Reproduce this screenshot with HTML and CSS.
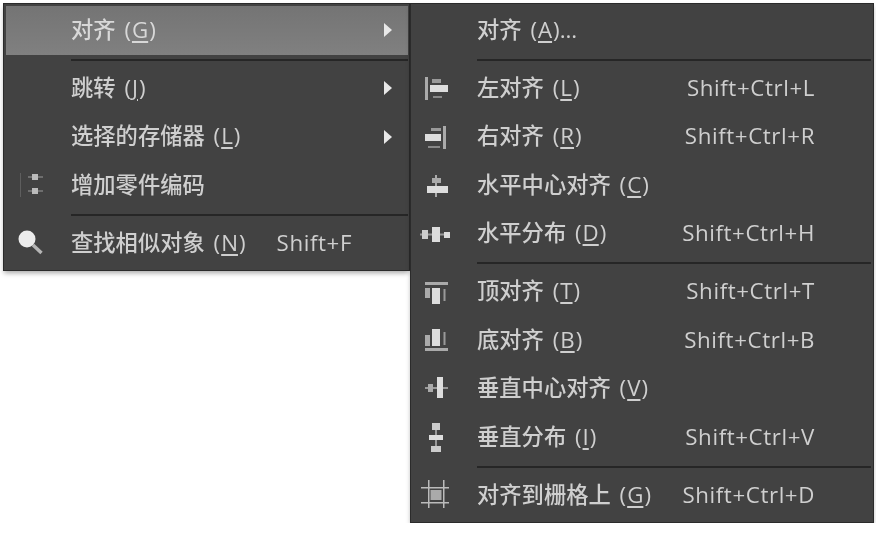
FILE: index.html
```html
<!DOCTYPE html>
<html lang="zh-CN">

<head>
    <meta charset="UTF-8">
    <title>对齐菜单</title>
    <link rel="stylesheet" href="styles.css">
</head>

<body>
    <div class="menus">

        <!-- main menu -->
        <div class="menu menu-main">
            <div class="row active">
                <span class="icon"></span>
                <span class="label">对齐 (<u>G</u>)</span>
                <span class="end"><i class="arrow"></i></span>
            </div>
            <div class="sep"></div>
            <div class="row">
                <span class="icon"></span>
                <span class="label">跳转 (<u>J</u>)</span>
                <span class="end"><i class="arrow"></i></span>
            </div>
            <div class="row">
                <span class="icon"></span>
                <span class="label">选择的存储器 (<u>L</u>)</span>
                <span class="end"><i class="arrow"></i></span>
            </div>
            <div class="row">
                <span class="icon">
                    <svg width="30" height="30" viewBox="0 0 30 30">
                        <rect x="6" y="3" width="1" height="24" fill="#5e5e5e" />
                        <rect x="14" y="6.5" width="15" height="1" fill="#999" />
                        <rect x="18" y="4" width="6" height="6" fill="#bbb" />
                        <rect x="14" y="20.5" width="15" height="1" fill="#999" />
                        <rect x="18" y="18" width="6" height="6" fill="#bbb" />
                    </svg>
                </span>
                <span class="label">增加零件编码</span>
                <span class="end"></span>
            </div>
            <div class="sep"></div>
            <div class="row">
                <span class="icon">
                    <svg width="30" height="30" viewBox="0 0 30 30">
                        <line x1="19" y1="17" x2="27.5" y2="25" stroke="#b5b5b5" stroke-width="3.5" />
                        <circle cx="13" cy="11" r="8.5" fill="#ececec" />
                    </svg>
                </span>
                <span class="label">查找相似对象 (<u>N</u>)</span>
                <span class="key">Shift+F</span>
                <span class="end"></span>
            </div>
        </div>

        <!-- align submenu -->
        <div class="menu menu-sub">
            <div class="row">
                <span class="icon"></span>
                <span class="label">对齐 (<u>A</u>)...</span>
                <span class="end"></span>
            </div>
            <div class="sep"></div>
            <div class="row">
                <span class="icon">
                    <svg width="30" height="30" viewBox="0 0 30 30">
                        <rect x="5" y="4" width="3" height="23" fill="#aaa" />
                        <rect x="12" y="6" width="9" height="4" fill="#999" />
                        <rect x="10" y="12" width="18" height="7" fill="#ddd" />
                        <rect x="13" y="23" width="9" height="2" fill="#888" />
                    </svg>
                </span>
                <span class="label">左对齐 (<u>L</u>)</span>
                <span class="key">Shift+Ctrl+L</span>
                <span class="end"></span>
            </div>
            <div class="row">
                <span class="icon">
                    <svg width="30" height="30" viewBox="0 0 30 30">
                        <rect x="23" y="4" width="3" height="23" fill="#aaa" />
                        <rect x="11" y="6" width="10" height="3" fill="#999" />
                        <rect x="5" y="12" width="16" height="7" fill="#ddd" />
                        <rect x="8" y="24" width="12" height="2" fill="#888" />
                    </svg>
                </span>
                <span class="label">右对齐 (<u>R</u>)</span>
                <span class="key">Shift+Ctrl+R</span>
                <span class="end"></span>
            </div>
            <div class="row">
                <span class="icon">
                    <svg width="30" height="30" viewBox="0 0 30 30">
                        <rect x="15" y="5" width="2" height="22" fill="#aaa" />
                        <rect x="12" y="8" width="9" height="5" fill="#aaa" />
                        <rect x="7" y="16" width="21" height="7" fill="#ddd" />
                    </svg>
                </span>
                <span class="label">水平中心对齐 (<u>C</u>)</span>
                <span class="end"></span>
            </div>
            <div class="row">
                <span class="icon">
                    <svg width="30" height="30" viewBox="0 0 30 30">
                        <rect x="0" y="14.5" width="30" height="2" fill="#999" />
                        <rect x="2" y="11" width="6" height="9" fill="#ccc" />
                        <rect x="12" y="8" width="8" height="15" fill="#ddd" />
                        <rect x="24" y="13" width="6" height="6" fill="#ddd" />
                    </svg>
                </span>
                <span class="label">水平分布 (<u>D</u>)</span>
                <span class="key">Shift+Ctrl+H</span>
                <span class="end"></span>
            </div>
            <div class="sep"></div>
            <div class="row">
                <span class="icon">
                    <svg width="30" height="30" viewBox="0 0 30 30">
                        <rect x="5" y="5" width="23" height="3" fill="#aaa" />
                        <rect x="5" y="11" width="5" height="10" fill="#aaa" />
                        <rect x="12" y="11" width="8" height="16" fill="#ddd" />
                        <rect x="23.5" y="12" width="2" height="12" fill="#999" />
                    </svg>
                </span>
                <span class="label">顶对齐 (<u>T</u>)</span>
                <span class="key">Shift+Ctrl+T</span>
                <span class="end"></span>
            </div>
            <div class="row">
                <span class="icon">
                    <svg width="30" height="30" viewBox="0 0 30 30">
                        <rect x="5" y="10" width="5" height="11" fill="#aaa" />
                        <rect x="12" y="4" width="8" height="17" fill="#ddd" />
                        <rect x="23.5" y="7" width="2" height="13" fill="#999" />
                        <rect x="5" y="23" width="23" height="3" fill="#aaa" />
                    </svg>
                </span>
                <span class="label">底对齐 (<u>B</u>)</span>
                <span class="key">Shift+Ctrl+B</span>
                <span class="end"></span>
            </div>
            <div class="row">
                <span class="icon">
                    <svg width="30" height="30" viewBox="0 0 30 30">
                        <rect x="5" y="13" width="23" height="2" fill="#999" />
                        <rect x="8" y="10" width="5" height="8" fill="#aaa" />
                        <rect x="17" y="3" width="6" height="21" fill="#ddd" />
                    </svg>
                </span>
                <span class="label">垂直中心对齐 (<u>V</u>)</span>
                <span class="end"></span>
            </div>
            <div class="row">
                <span class="icon">
                    <svg width="30" height="30" viewBox="0 0 30 30">
                        <rect x="15" y="1" width="2" height="29" fill="#999" />
                        <rect x="12" y="1" width="8" height="7" fill="#ccc" />
                        <rect x="9" y="13" width="14" height="5" fill="#ddd" />
                        <rect x="11" y="24" width="10" height="6" fill="#ccc" />
                    </svg>
                </span>
                <span class="label">垂直分布 (<u>I</u>)</span>
                <span class="key">Shift+Ctrl+V</span>
                <span class="end"></span>
            </div>
            <div class="sep"></div>
            <div class="row">
                <span class="icon">
                    <svg width="30" height="30" viewBox="0 0 30 30">
                        <rect x="8" y="0" width="1.5" height="28" fill="#bbb" />
                        <rect x="23" y="0" width="1.5" height="28" fill="#bbb" />
                        <rect x="1" y="7" width="28" height="1.5" fill="#bbb" />
                        <rect x="1" y="22" width="28" height="1.5" fill="#bbb" />
                        <rect x="10.5" y="10" width="11" height="10" fill="#aaa" />
                    </svg>
                </span>
                <span class="label">对齐到栅格上 (<u>G</u>)</span>
                <span class="key">Shift+Ctrl+D</span>
                <span class="end"></span>
            </div>
        </div>

    </div>
</body>

</html>
```

FILE: styles.css
```css
* {
    margin: 0;
    padding: 0;
    box-sizing: border-box;
}

body {
    background: #fff;
    font-family: "Open Sans", "Noto Sans CJK SC", sans-serif;
    font-size: 22.3px;
    font-weight: 500;
    color: #cfcfcf;
}

.menus {
    display: flex;
    align-items: flex-start;
    padding: 3px 2px 0 3px;
    filter: blur(0.7px);
}

.menu {
    background: #424242;
    border: 1px solid #2b2b2b;
    padding: 2px;
    box-shadow: 0 3px 5px -1px rgba(0, 0, 0, .35);
}

.menu-main {
    width: 407px;
    padding-right: 1px;
}

.menu-sub {
    flex: 1;
}

/* ROWS ================================= */
.row {
    display: flex;
    align-items: center;
    height: 48.5px;
}

.row.active {
    background: linear-gradient(#747474, #808080);
    color: #d8d8d8;
}

.icon {
    display: flex;
    align-items: center;
    width: 64px;
    padding-left: 7px;
    flex-shrink: 0;
}

.menu-main .icon {
    width: 65px;
    padding-left: 8px;
}

.label {
    flex: 1;
    padding-bottom: 4px;
    white-space: nowrap;
    word-spacing: 3px;
}

.label u {
    padding: 0 1px;
    text-underline-offset: 3px;
}

.key {
    padding-bottom: 2px;
    letter-spacing: .6px;
    white-space: nowrap;
}

.end {
    display: flex;
    justify-content: flex-end;
    width: 56px;
    padding-right: 17px;
    flex-shrink: 0;
}

.menu-main .end {
    padding-right: 16px;
}

.arrow {
    display: block;
    border-left: 8px solid #e8e8e8;
    border-top: 7px solid transparent;
    border-bottom: 7px solid transparent;
}

.sep {
    height: 2px;
    margin: 4px 0 3.5px 64px;
    background: #262626;
}

.menu-main .sep {
    margin-left: 65px;
}
```
